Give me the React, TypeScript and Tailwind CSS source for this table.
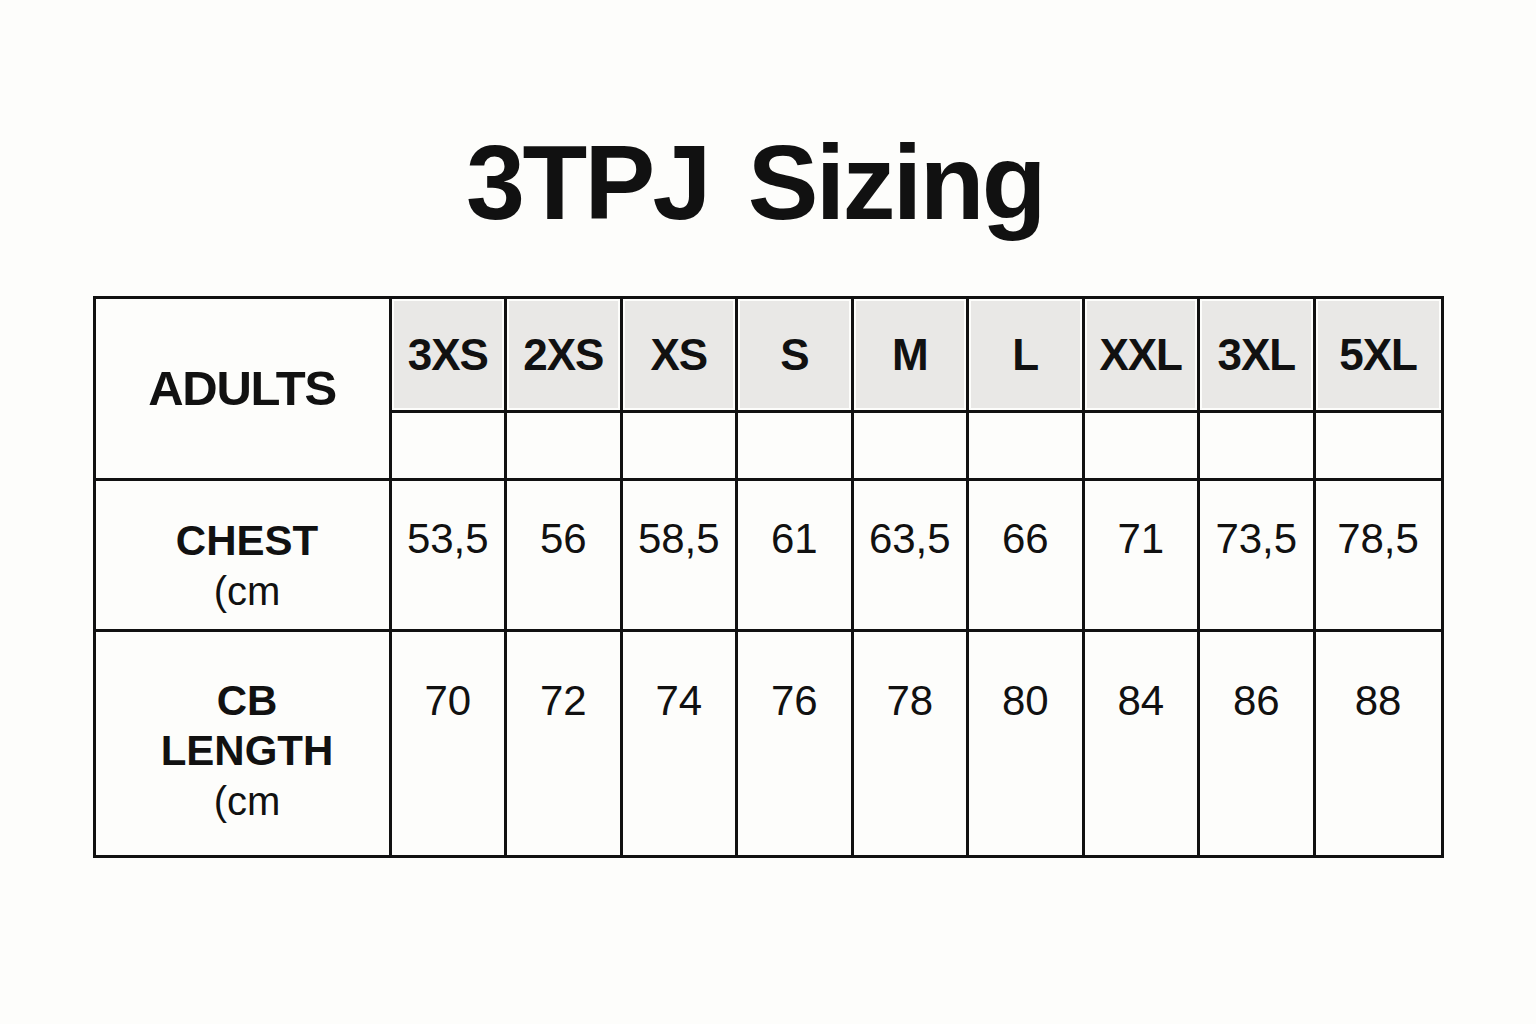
const sizes = ["3XS", "2XS", "XS", "S", "M", "L", "XXL", "3XL", "5XL"];
const chest = ["53,5", "56", "58,5", "61", "63,5", "66", "71", "73,5", "78,5"];
const cbLength = ["70", "72", "74", "76", "78", "80", "84", "86", "88"];

export default function App() {
  return (
    <div
      className="min-h-screen w-full bg-[#fdfdfb] text-[#111111] flex flex-col items-center pt-[129px]"
      style={{ fontFamily: '"Liberation Sans", Arial, sans-serif' }}
    >
      {/* 제목 */}
      <h1 className="text-[106px] leading-none font-bold tracking-tight [word-spacing:12px] pr-[26px] m-0">
        3TPJ Sizing
      </h1>

      {/* 사이즈 표 */}
      <table className="mt-[61px] w-[1348px] table-fixed border-collapse border-[3px] border-[#111111]">
        <colgroup>
          <col className="w-[296px]" />
          {sizes.map((s, i) => (
            <col key={s} className={i === sizes.length - 1 ? "w-[128px]" : "w-[115.5px]"} />
          ))}
        </colgroup>
        <tbody>
          <tr className="h-[114px]">
            <td
              rowSpan={2}
              className="border-[3px] border-[#111111] text-center align-middle text-[49px] font-bold tracking-tight"
            >
              ADULTS
            </td>
            {sizes.map((s) => (
              <td
                key={s}
                className="border-[3px] border-[#111111] bg-[#e9e8e6] shadow-[inset_0_0_0_2px_#fdfdfb] text-center align-middle text-[44px] font-bold tracking-tight"
              >
                {s}
              </td>
            ))}
          </tr>
          <tr className="h-[68px]">
            {sizes.map((s) => (
              <td key={s} className="border-[3px] border-[#111111]" />
            ))}
          </tr>
          <tr className="h-[151px]">
            <td className="border-[3px] border-[#111111] text-center align-top pt-[35px] pl-[10px] leading-[50px]">
              <div className="text-[42px] font-bold">CHEST</div>
              <div className="text-[40px]">(cm</div>
            </td>
            {chest.map((v, i) => (
              <td
                key={i}
                className="border-[3px] border-[#111111] text-center align-top pt-[33px] leading-[50px] text-[42px]"
              >
                {v}
              </td>
            ))}
          </tr>
          <tr className="h-[226px]">
            <td className="border-[3px] border-[#111111] text-center align-top pt-[44px] pl-[10px] leading-[50px]">
              <div className="text-[42px] font-bold">CB</div>
              <div className="text-[42px] font-bold">LENGTH</div>
              <div className="text-[40px]">(cm</div>
            </td>
            {cbLength.map((v, i) => (
              <td
                key={i}
                className="border-[3px] border-[#111111] text-center align-top pt-[44px] leading-[50px] text-[42px]"
              >
                {v}
              </td>
            ))}
          </tr>
        </tbody>
      </table>
    </div>
  );
}
